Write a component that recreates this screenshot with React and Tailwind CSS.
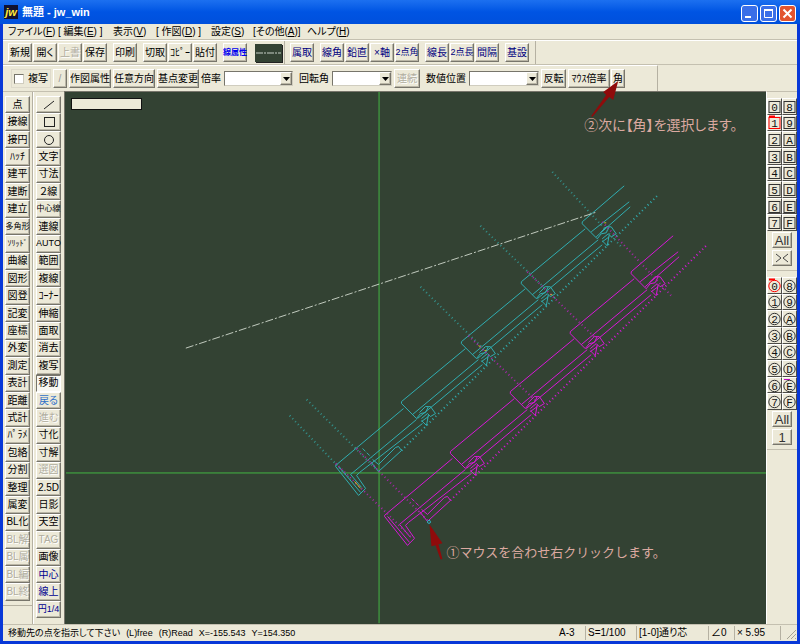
import React, { useState } from 'react';

const bevel = 'border border-t-white border-l-white border-r-[#77756b] border-b-[#77756b] shadow-[inset_-1px_-1px_0_#bab6a6]';
const pressed = 'border border-t-[#77756b] border-l-[#77756b] border-r-white border-b-white bg-[#f8f7f2]';

const menus = [
  { before: 'ファイル(', key: 'F', after: ')', width: 'w-[50px]' },
  { before: '[ 編集(', key: 'E', after: ') ]', width: 'w-[55px]' },
  { before: '表示(', key: 'V', after: ')', width: 'w-[43px]' },
  { before: '[ 作図(', key: 'D', after: ') ]', width: 'w-[55px]' },
  { before: '設定(', key: 'S', after: ')', width: 'w-[42px]' },
  { before: '[その他(', key: 'A', after: ')]', width: 'w-[54px]' },
  { before: 'ヘルプ(', key: 'H', after: ')', width: 'w-[50px]' },
];

const fileGroups = [
  ['新規', '開く', '上書', '保存'],
  ['印刷'],
  ['切取', 'ｺﾋﾟｰ', '貼付'],
  ['線属性'],
];

const measureGroups = [
  ['属取'],
  ['線角', '鉛直', '×軸', '2点角'],
  ['線長', '2点長', '間隔'],
  ['基設'],
];

const leftTools = [
  '点', '接線', '接円', 'ﾊｯﾁ', '建平', '建断', '建立', '多角形', 'ｿﾘｯﾄﾞ', '曲線',
  '図形', '図登', '記変', '座標', '外変', '測定', '表計', '距離', '式計', 'ﾊﾟﾗﾒ',
  '包絡', '分割', '整理', '属変', 'BL化', 'BL解', 'BL属', 'BL編', 'BL終',
];

const rightTools = [
  '／', '□', '○', '文字', '寸法', '２線', '中心線', '連線', 'AUTO', '範囲',
  '複線', 'ｺｰﾅｰ', '伸縮', '面取', '消去', '複写', '移動', '戻る', '進む', '寸化',
  '寸解', '選図', '2.5D', '日影', '天空', 'TAG', '画像', '中心', '線上', '円1/4',
];

const disabledTools = ['上書', '連続', '進む', '選図', 'TAG', 'BL解', 'BL属', 'BL編', 'BL終'];
const navyTools = ['中心', '線上', '円1/4'];
const tinyTools = ['多角形', '中心線', '線属性', 'ｿﾘｯﾄﾞ'];
const smallTools = ['AUTO', '2点角', '2点長', '円1/4'];
const layerRows = [['0', '8'], ['1', '9'], ['2', 'A'], ['3', 'B'], ['4', 'C'], ['5', 'D'], ['6', 'E'], ['7', 'F']];

const toolIcons = {
  '／': <path d="M3 12 L13 4" />,
  '□': <rect x="3.5" y="3.5" width="10" height="9" />,
  '○': <circle cx="8" cy="8" r="4.5" />,
};

const textColor = (label) => {
  if (disabledTools.includes(label)) return 'text-[#b0ad9f] [text-shadow:1px_1px_0_#fff]';
  if (navyTools.includes(label)) return 'text-[#000090]';
  if (label === '線属性') return 'text-[#0000f0] font-bold';
  if (label === '戻る') return 'text-[#2f70c8]';
  return 'text-black';
};

const textSize = (label) => {
  if (tinyTools.includes(label)) return 'text-[8px]';
  if (smallTools.includes(label)) return 'text-[9px]';
  return 'text-[10px]';
};

const ToolButton = ({ label, className = '', color, active = false, onClick }) => (
  <button
    type="button"
    onClick={onClick}
    disabled={disabledTools.includes(label)}
    aria-label={label}
    className={`flex min-h-0 items-center justify-center whitespace-nowrap leading-none ${active ? pressed : bevel} ${color || textColor(label)} ${textSize(label)} ${className}`}
  >
    {toolIcons[label] ? (
      <svg viewBox="0 0 16 16" className="h-4 w-4" fill="none" stroke="#222" strokeWidth="1">{toolIcons[label]}</svg>
    ) : label}
  </button>
);

const ToolColumn = ({ tools, active, onPick, className }) => (
  <div className={`flex flex-col ${className}`}>
    {tools.map(label => (
      <ToolButton
        key={label}
        label={label}
        active={active === label}
        onClick={() => onPick(label)}
        className="w-[25px] flex-1"
      />
    ))}
  </div>
);

const ButtonGroup = ({ labels, color }) => (
  <div className="flex gap-px">
    {labels.map(label => <ToolButton key={label} label={label} color={color} className="h-[19px] w-6" />)}
  </div>
);

const Combo = ({ label, className }) => (
  <label className="flex items-center gap-[3px] whitespace-nowrap">
    {label}
    <span className={`relative block h-[15px] ${className}`}>
      <select className="block h-full w-full appearance-none border border-t-[#77756b] border-l-[#77756b] border-r-[#d0cdbf] border-b-[#d0cdbf] bg-white" />
      <span className={`pointer-events-none absolute top-px right-px bottom-px flex w-3 items-center justify-center bg-[#ece9d8] ${bevel}`}>
        <svg viewBox="0 0 7 4" className="h-1 w-[7px] shrink-0"><path d="M0 0 H7 L3.5 4 Z" /></svg>
      </span>
    </span>
  </label>
);

const LayerPanel = ({ round, current, marked, footer }) => (
  <div className="flex flex-col items-center border-b border-[#c4c0b0] pb-1">
    <div className="grid h-[133px] w-[30px] grid-cols-2 grid-rows-8">
      {layerRows.flat().map(n => (
        <button
          key={n}
          type="button"
          className="flex min-h-0 items-center justify-center border-t border-l border-t-white border-l-white border-r border-b border-r-[#4d4c47] border-b-[#4d4c47]"
        >
          <svg viewBox="0 0 13 15" className="h-[15px] w-[13px] shrink-0" fill="none" stroke={n === current ? '#f00' : '#333'}>
            {round ? <circle cx="6.5" cy="8" r="5.7" /> : <rect x="1" y="2.5" width="11" height="11" />}
            {n === current && <path d="M1 1.5 H7" stroke="#f00" strokeWidth="2" />}
            {n === marked && <path d="M1 1.5 H7" stroke="#c000c0" />}
            <text x="6.500" y="12" textAnchor="middle" fill="#111" stroke="none" className="font-['Liberation_Mono',monospace] text-[11px]">{n}</text>
          </svg>
        </button>
      ))}
    </div>
    <div className="mt-px flex flex-col gap-0.5">
      {footer.map(label => (
        <button key={label} type="button" aria-label={label} className={`flex h-4 w-5 items-center justify-center text-[13px] leading-none text-[#333] ${bevel}`}>
          {label === '><' ? (
            <svg viewBox="0 0 14 10" className="h-[10px] w-[14px]" fill="none" stroke="#444"><path d="M1 1 L6 5 L1 9 M13 1 L8 5 L13 9" /></svg>
          ) : label}
        </button>
      ))}
    </div>
  </div>
);

// One board of the stepped section, origin at its upper left corner
const boardEnd = 'M0 0 V2 L15 17 L19 12 L24 11 L27 5 L24 5 L18 11 M27 5 L29 5 L34 12 L29 15 L26 12 L20 17 M20 19 L25 24 L27 13 M20 20 L27 15';
const board = 'M0 0 L64 -53 M11 13 L77 -42 M16 17 L81 -37';
const topBoard = 'M0 0 L42 -36 M9 10 L47 -20 M14 15 L48 -15';
const base = 'M0 0 L68 -57 M0 0 V1 L23 30 L30 23 L21 10 L24 7 L87 -42 M3 1 L25 27 M15 9 L26 22 M15 9 L81 -46 M35 -4 L43 6 L66 -15 L63 -19 L60 -18 L43 -1 L37 -6';

const Section = ({ x, y, color }) => (
  <g transform={`translate(${x} ${y})`} stroke={color}>
    <path d={base} />
    {[0, 1, 2].map(i => (
      <path key={i} d={board + boardEnd} transform={`translate(${66 + i * 60} ${-64 - i * 60})`} />
    ))}
    <path d={topBoard + boardEnd} transform="translate(247 -244)" />
    <path d="M27 -17 L36 -8" strokeDasharray="4 2" />
    <path d="M66 -15 L322 -270" strokeDasharray="1 3" strokeWidth="2" />
  </g>
);

const Drawing = () => (
  <svg viewBox="65 92 701 532" preserveAspectRatio="xMinYMin meet" className="block h-full w-full overflow-visible" fill="none">
    <path d="M378.5 92 V624 M65 473.5 H766" stroke="#43b543" />
    <Section x={335} y={466} color="#30aeb2" />
    <Section x={384} y={516} color="#d818d8" />
    <g strokeDasharray="1 3" strokeWidth="2">
      <path d="M552 172 L622 248 M480 226 L546 290 M420 287 L485 351 M306 400 L378 472 M289 416 L350 480" stroke="#33918c" />
      <path d="M602 222 L672 297 M527 272 L599 342 M468 336 L535 401 M356 449 L428 522 M335 464 L411 538" stroke="#a528a8" />
    </g>
    <path d="M478 346 L480 347 M484 351 h2 M550 295 h2 M604 223 h2 M354 482 L360 489" stroke="#c6bd24" />
    <path d="M185 348.5 L597 212" stroke="#c2cbbf" strokeDasharray="8 2 2 2" />
    <circle cx="428.500" cy="522.500" r="1.500" stroke="#2fb0c0" />
    <g fill="#8f0b0b" stroke="none">
      <path d="M429 525 L442 544 L438 545 L442 560 L440 560 L435 546 L431 547 Z" />
      <path d="M618 81 L613 100 L609 97 L592 117 L591 116 L606 95 L603 92 Z" />
    </g>
    <g fill="#dba9a0">
      <text x="446" y="558" className="text-[13px] [font-feature-settings:normal]">①マウスを合わせ右クリックします。</text>
      <text x="584" y="130" className="text-[14px]">②次に【角】を選択します。</text>
    </g>
  </svg>
);

const App = () => {
  const [tool, setTool] = useState('移動');

  return (
    <div className="flex min-h-screen w-full flex-col border-x-[3px] border-b-[3px] border-[#0838d8] bg-[#ece9d8] font-['Liberation_Sans','Noto_Sans_CJK_JP',sans-serif] text-[10px] leading-none text-black [font-feature-settings:'palt']">
      <header className="-mx-[3px] flex h-6 items-center justify-between bg-linear-to-b from-[#1c70f0] via-[#0054e3] to-[#0050dc] px-1">
        <h1 className="flex items-center gap-1 text-[11px] font-bold text-white">
          <span className="flex h-[14px] w-[14px] items-center justify-center bg-[#111130] text-[11px] text-[#ffe838] italic">jw</span>
          無題 - jw_win
        </h1>
        <div className="flex gap-0.5 pt-0.5">
          <button type="button" aria-label="最小化" className="flex h-[17px] w-[17px] items-center justify-center rounded-[3px] border border-white bg-[#3a6fe8]">
            <svg viewBox="0 0 15 15" className="h-[15px] w-[15px]"><path d="M3 11 H9" stroke="#fff" strokeWidth="2" /></svg>
          </button>
          <button type="button" aria-label="最大化" className="flex h-[17px] w-[17px] items-center justify-center rounded-[3px] border border-white bg-[#3a6fe8]">
            <svg viewBox="0 0 15 15" className="h-[15px] w-[15px]" fill="none" stroke="#fff"><path d="M3.500 4 V11.500 H11.500 V4" /><path d="M3 4 H12" strokeWidth="2" /></svg>
          </button>
          <button type="button" aria-label="閉じる" className="flex h-[17px] w-[17px] items-center justify-center rounded-[3px] border border-white bg-[#e2542f]">
            <svg viewBox="0 0 15 15" className="h-[15px] w-[15px]" stroke="#fff" strokeWidth="2"><path d="M3.500 3.500 L11.500 11.500 M11.500 3.500 L3.500 11.500" /></svg>
          </button>
        </div>
      </header>

      <nav className="flex h-4 items-center border-b border-[#c4c0b0] pl-[5px]">
        {menus.map(m => (
          <button key={m.key} type="button" className={`text-left whitespace-nowrap ${m.width}`}>
            {m.before}<u>{m.key}</u>{m.after}
          </button>
        ))}
      </nav>

      <div className="flex h-6 items-center border-t border-white">
        <div className="flex h-full items-center gap-1.5 border-r border-[#b5b1a2] pr-1.5 pl-[5px]">
          {fileGroups.map(g => <ButtonGroup key={g[0]} labels={g} />)}
          <button type="button" aria-label="線種" className="ml-0.5 flex h-[18px] w-[27px] items-center bg-[#334233] shadow-[1px_1px_0_#222]">
            <svg viewBox="0 0 27 2" className="h-0.5 w-full"><path d="M1 1 H26" stroke="#c8d0c8" strokeDasharray="7 1 2 1" /></svg>
          </button>
          <div className="-ml-1 flex h-full items-center gap-1.5 border-l border-[#b5b1a2] pl-[5px]">
            {measureGroups.map(g => <ButtonGroup key={g[0]} labels={g} color="text-[#000080]" />)}
          </div>
        </div>
      </div>

      <div className="flex h-[27px] items-center border-t border-[#c4c0b0]">
        <div className="flex h-full items-center gap-0.5 border-t border-r border-t-white border-r-[#b5b1a2] pr-8 pl-2">
          <label className="flex h-[19px] w-10 items-center gap-1 border border-[#dedacb] pl-0.5">
            <input type="checkbox" className="h-[10px] w-[10px] appearance-none border border-t-[#77756b] border-l-[#77756b] border-r-[#d0cdbf] border-b-[#d0cdbf] bg-white checked:bg-[#334233]" />
            複写
          </label>
          <ToolButton label="/" color="text-[#999]" className="h-[19px] w-[14px]" />
          <ToolButton label="作図属性" className="h-[19px] w-[42px]" />
          <ToolButton label="任意方向" className="h-[19px] w-[42px]" />
          <ToolButton label="基点変更" className="h-[19px] w-[42px]" />
          <Combo label="倍率" className="w-[69px]" />
          <span className="w-0.5" />
          <Combo label="回転角" className="w-[60px]" />
          <ToolButton label="連続" className="h-[19px] w-[26px]" />
          <span className="w-0.5" />
          <Combo label="数値位置" className="w-[70px]" />
          <ToolButton label="反転" className="h-[19px] w-[25px]" />
          <div className="flex gap-px">
            <ToolButton label="ﾏｳｽ倍率" className="h-[19px] w-[42px]" />
            <ToolButton label="角" className="h-[19px] w-[14px]" />
          </div>
        </div>
      </div>

      <main className="flex min-h-0 flex-1">
        <aside className="flex border-t border-[#c4c0b0]">
          <div className="flex flex-col">
            <ToolColumn tools={leftTools} active={tool} onPick={setTool} className="flex-1 border-r border-b border-[#b5b1a2] pt-1 pr-0.5 pb-1 pl-0.5" />
            <div className="h-[18px] border-r border-[#b5b1a2]" />
          </div>
          <ToolColumn tools={rightTools} active={tool} onPick={setTool} className="border-l border-white pt-1 pr-[3px] pb-1.5 pl-0.5" />
        </aside>
        <section className="relative z-10 min-w-0 flex-1 border-t border-l border-[#77756b] bg-[#334233] pl-px">
          <div className="h-full w-full"><Drawing /></div>
          <div className="absolute top-1.5 left-1.5 h-3 w-[71px] border border-[#111] bg-[#ece9d8]" />
        </section>
        <aside className="flex w-[31px] flex-col gap-1.5 border-t border-l border-t-[#c4c0b0] border-l-white pt-1.5">
          <LayerPanel current="1" footer={['All', '><']} />
          <LayerPanel round current="0" marked="E" footer={['All', '1']} />
        </aside>
      </main>

      <footer className="flex h-[17px] items-center justify-between border-t border-[#c4c0b0] pl-[5px]">
        <p className="flex gap-1.5 text-[9px] whitespace-nowrap">
          <span>移動先の点を指示して下さい</span><span>(L)free</span><span>(R)Read</span><span>X=-155.543</span><span>Y=154.350</span>
        </p>
        <div className="flex items-center gap-0.5 whitespace-nowrap">
          <button type="button" className="h-[14px] w-[27px] border-r border-[#b5b1a2] text-left">A-3</button>
          <button type="button" className="h-[14px] w-[49px] border-r border-[#b5b1a2] text-left">S=1/100</button>
          <button type="button" className="h-[14px] w-[70px] border-r border-[#b5b1a2] text-left">[1-0]通り芯</button>
          <button type="button" className="h-[14px] w-6 border-r border-[#b5b1a2] text-left">∠0</button>
          <button type="button" className="h-[14px] w-11 border-r border-[#b5b1a2] text-left">× 5.95</button>
          <svg viewBox="0 0 14 14" className="h-[14px] w-[14px]" stroke="#a5a294"><path d="M4 13 L13 4 M8 13 L13 8 M12 13 L13 12" /></svg>
        </div>
      </footer>
    </div>
  );
};

export default App;
